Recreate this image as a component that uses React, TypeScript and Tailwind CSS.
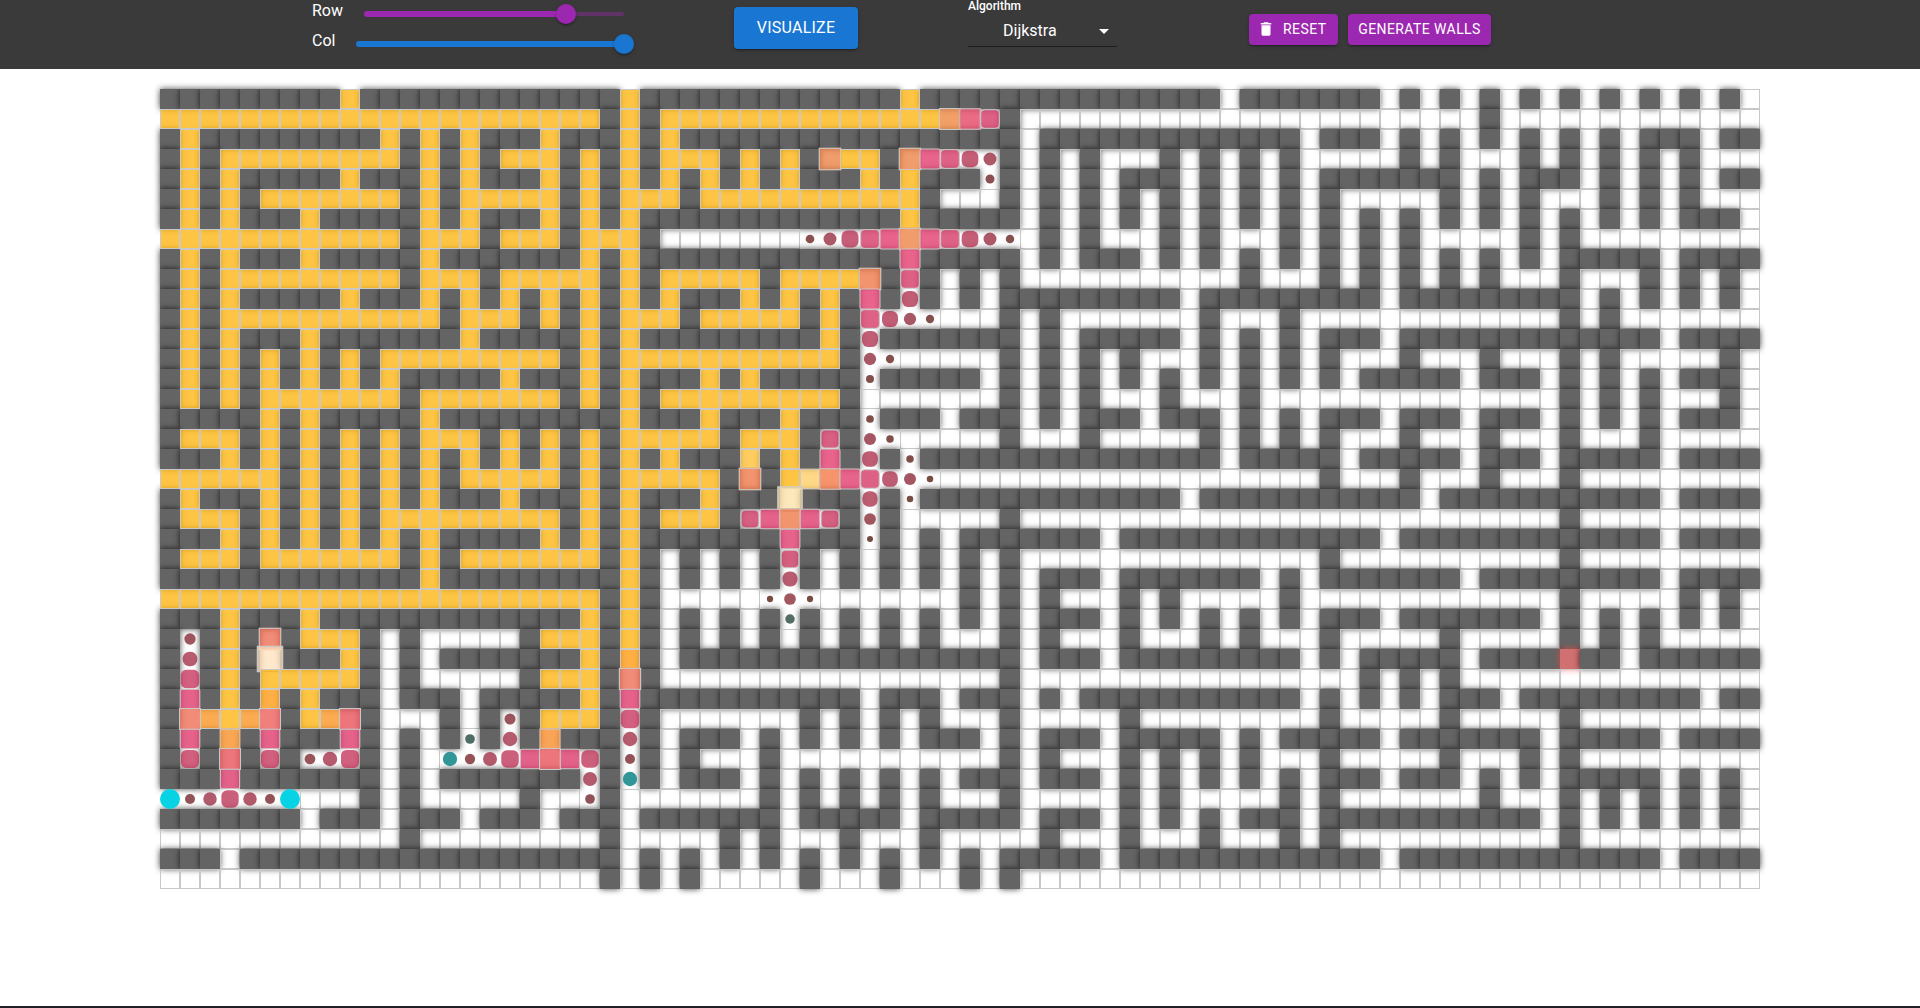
import type { CSSProperties } from "react";

// One character per cell: "#" wall, "y" visited, "." open, "T" target wall.
const MAZE: string[] = [
  "#########y##########" + "###y#############y##" + "#############.######" + "#.#.#.#.#.#.#.#.#.#.",
  "yyyyyyyyyyyyyyyyyyyy" + "yy#y#yyyyyyyyyyyyyyy" + "..#................." + "......#.............",
  "#y#########y#y#y###y" + "###y#y##############" + "###.#############.##" + "#.#.#.#.#.#.#.###.##",
  "#y#yyyyyyyyy#y#y#yyy" + "#y#y#yyy#y#y#yyy#y.." + "..#.#.#...#.#.#.#..." + "..#.#...#.#.#.#.#...",
  "#y#y#####y###y#y###y" + "#y#y#y#y#y#y###y#y##" + "#.#.#.#.###.#.#.#.##" + "#####.#.###.#.#.#.##",
  "#y#y#yyyyyyy#y#yyyyy" + "#y#yyy#yyyyyyyyyyy#." + "..#.#.#.#.#.#.#.#.#." + "....#.#.#...#.#.#...",
  "#y#y###y#####y#y###y" + "#y#y#############y##" + "###.#.#.#.#.#.#.#.#." + "#.#.#.#.#.#.#.#.###.",
  "yyyyyyyyyyyy#yyy#yyy" + "#yyy#..............." + "....#.#...#.#...#.#." + "#.#.....#.#.........",
  "#y#y###y#####y######" + "#y#y#############.##" + "###.#.###.#.#.#.#.#." + "#.#.#.#.#.#####.####",
  "#y#yyyyyyyyy#yyy#yyy" + "yy#y#yyyyy#yyyyy#.#." + "#.#...........#...#." + "#.#.#.#...#...#.#.#.",
  "#y#y#####y###y#y#y#y" + "#y#y#y###y#y#y#.#.#." + "#.#########.########" + "#.#########.#.#.#.#.",
  "#y#yyyyyyyyyyy#yyy#y" + "#y#yyy#yyyyy#y#....." + "..#.#.......#...#..." + "..........#.#.......",
  "#y#y###y#######y####" + "#y#y#########y#.####" + "###.#.#####.#.#.#.##" + "#.#############.####",
  "#y#y#y#y#y#yyyyyyyyy" + "#y#yyyyyyyyyyy#....." + "..#.#.#.#...#.#.#.#." + "..#...#...#.#.....#.",
  "#y#y#y#y#y#y#####y##" + "#y#y###y#y#####.####" + "#.#.#.#.#.#.#.#.#.#." + "#####.###.#.#.#.###.",
  "#y#y#yyyyyyy#yyyyyyy" + "#y#y#yyyyyyyyy#....." + "..#.#.#...#...#....." + "..........#.#.#...#.",
  "#####y#y#####y######" + "###y###y###y###.###." + "###.#.###.###.#.#.##" + "#.###.###.#.#.#.###.",
  "#yyy#y#y#y#y#yyy#y#y" + "#y#yyyyy#yyy#.#....." + "..#...#.....#.#.#.#." + "..#...#...#...#.....",
  "###y#y#y#y#y#y#y#y#y" + "#y#y#y###y#y#.#.#.##" + "#############.#####." + "#####.###.#####.####",
  "yyyyyy#y#y#y#y#yyyyy" + "#y#yyyyy#y#yyy......" + "..................#." + "..#...#...#.........",
  "#y###y#y#y#y#y###y##" + "#y#y###y###y###.#.##" + "###########.########" + "###.###########.####",
  "#yyy#y#y#y#yyyyyyyyy" + "#y#y#yyy#.....#.#..." + "..#................." + "..........#.........",
  "###y#y#y#y#y#y#####y" + "#y#y#######.###.#.#." + "#######.############" + "#.#############.####",
  "#yyy#yyyyyyy#y#yyyyy" + "yy#y#.#.#.#.#.#.#.#." + "#.#...............#." + "..........#.........",
  "#############y######" + "###y#.#.#.#.#.#.#.#." + "#.#.###.#######.#.##" + "#####.#########.####",
  "yyyyyyyyyyyyyyyyyyyy" + "yy#y#..............." + "#.#.#...#.#.....#..." + "..........#.....#.#.",
  "###y###y############" + "#y#y#.#.#.#.#.#.#.#." + "#.#.###.#.#.#.#.#.##" + "#.#######.#.#.#.#.#.",
  "#.#y#y#yyy#.#.....#y" + "yy#y#.#.#.#.#.#.#.#." + "..#.#...#...#.#...#." + "....#.....#.#.#.....",
  "#.#y#y###y#.#.######" + "#y#y#.##############" + "###.###.#########.#." + "#####.####T##.######",
  "#.#y#yyyyy#.#.....#y" + "yy#y#..............." + "..#................." + "#.#.#...............",
  "#.#y#y#y###.###.####" + "#y#.###########.###." + "###.#.###########.#." + "#.#.###.#########.##",
  "#yyyyy#yyy#...#.#.#y" + "yy#.#.......#.#.#.#." + "..#.....#.........#." + "....#.....#.........",
  "#.#y#.###.#.#.#.#.#y" + "###.#.###.#.#.#.#.##" + "#.#.###.#####.#.####" + "#.#######.#####.####",
  "#.#.#.#...#.#......." + "..#.#.#...#........." + "..#.#...#.#.#.#...#." + "....#...#.#.........",
  "###.#######.#.######" + "#.#.#.###.#.#.#.#.#." + "###.###.#.#.#.#.#.##" + "#.###.#.#.#####.#.#.",
  "..........#.#.....#." + "..#.......#.#.#.#.#." + "..#.....#.#.....#.#." + "......#...#.#.#.#.#.",
  "#######.###.###.###." + "###.#######.#####.##" + "###.###.#.#.#.###.##" + "#########.#.#.#.#.#.",
  "............#......." + "..#.....#.#...#...#." + "....#...#...#...#.#." + "..........#.........",
  "###.################" + "###.#.#.#.#.#.#.#.#." + "#.#####.############" + "#.#############.####",
  "...................." + "..#.#.#.....#...#..." + "#.#................." + "....................",
];

type Rgb = [number, number, number];
type Pulse = { size: number; color?: string; round?: boolean };

// Cells whose visit animation is still running, keyed "row:col".
const PULSES: Record<string, Pulse> = {};
function pulse(row: number, col: number, size: number, color?: string, round?: boolean) {
  PULSES[`${row}:${col}`] = { size, color, round };
}

const ORANGE = "rgba(235,123,59,0.75)";
const SALMON = "rgba(235,101,75,0.75)";
const CORAL = "rgba(229,72,80,0.75)";
const AMBER = "rgba(249,144,21,0.75)";

pulse(1, 39, 22, "rgba(237,128,53,0.75)");
pulse(1, 40, 21.5, "rgba(227,59,91,0.75)");
pulse(1, 41, 19.5);
pulse(3, 33, 22.5, ORANGE);
pulse(3, 37, 22.5, ORANGE);
pulse(3, 38, 21);
pulse(3, 39, 19.7);
pulse(3, 40, 16.7);
pulse(3, 41, 13);
pulse(4, 41, 9);
pulse(7, 32, 8.7);
pulse(7, 33, 13);
pulse(7, 34, 17);
pulse(7, 35, 19.7);
pulse(7, 36, 21);
pulse(7, 37, 22.5, ORANGE);
pulse(7, 38, 21);
pulse(7, 39, 19.7);
pulse(7, 40, 16.7);
pulse(7, 41, 13);
pulse(7, 42, 8.5);
pulse(8, 37, 21);
pulse(9, 35, 22.5, "rgba(237,112,61,0.75)");
pulse(9, 37, 19.5);
pulse(10, 35, 21);
pulse(10, 37, 16);
pulse(11, 35, 19.7);
pulse(11, 36, 16);
pulse(11, 37, 12.3);
pulse(11, 38, 8.3);
pulse(12, 35, 16);
pulse(13, 35, 12.3);
pulse(13, 36, 8.3);
pulse(14, 35, 8);
pulse(16, 35, 7.7);
pulse(17, 33, 19);
pulse(17, 35, 12);
pulse(17, 36, 7.5);
pulse(18, 29, 20, "rgba(255,187,43,0.75)");
pulse(18, 33, 21);
pulse(18, 35, 15.7);
pulse(18, 37, 7.5);
pulse(19, 29, 22.5, "rgba(237,112,61,0.75)");
pulse(19, 32, 20.5, "rgba(255,203,96,0.75)");
pulse(19, 33, 21.5, "rgba(243,112,61,0.75)");
pulse(19, 34, 21);
pulse(19, 35, 19.5);
pulse(19, 36, 15.7);
pulse(19, 37, 12);
pulse(19, 38, 6.5);
pulse(20, 31, 25.3, "rgba(252,224,165,0.75)");
pulse(20, 35, 15.3);
pulse(20, 37, 6.5);
pulse(21, 29, 18.7);
pulse(21, 30, 20.6);
pulse(21, 31, 21.5, "rgba(237,112,61,0.75)");
pulse(21, 32, 20.6);
pulse(21, 33, 18.7);
pulse(21, 35, 11.7);
pulse(22, 31, 20.8);
pulse(22, 35, 6);
pulse(23, 31, 18.5);
pulse(24, 31, 15);
pulse(25, 30, 6.3);
pulse(25, 31, 11.7);
pulse(25, 32, 6.3);
pulse(26, 31, 9.5, "#546c66", true);
pulse(27, 1, 11.3);
pulse(27, 5, 22.5, SALMON);
pulse(28, 1, 14.7);
pulse(28, 5, 26.3, "rgba(255,224,187,0.75)");
pulse(28, 23, 20, "rgba(253,149,5,0.75)");
pulse(29, 1, 18.3);
pulse(29, 23, 22.3, SALMON);
pulse(30, 1, 20.6);
pulse(30, 5, 20, "rgba(253,149,5,0.75)");
pulse(30, 23, 20.6);
pulse(31, 1, 22, SALMON);
pulse(31, 2, 20, AMBER);
pulse(31, 4, 20, AMBER);
pulse(31, 5, 22, "rgba(235,85,80,0.75)");
pulse(31, 8, 20, AMBER);
pulse(31, 9, 22, CORAL);
pulse(31, 17, 11);
pulse(31, 23, 18.3);
pulse(32, 1, 20.6);
pulse(32, 3, 20.6, "rgba(248,137,28,0.75)");
pulse(32, 5, 20.6);
pulse(32, 9, 20.6);
pulse(32, 15, 9.7, "#506c66", true);
pulse(32, 17, 14.3);
pulse(32, 19, 21, "rgba(248,133,32,0.75)");
pulse(32, 23, 14.3);
pulse(33, 1, 18);
pulse(33, 3, 22, CORAL);
pulse(33, 5, 18);
pulse(33, 7, 10.7);
pulse(33, 8, 14.3);
pulse(33, 9, 18);
pulse(33, 14, 14.3, "#309698", true);
pulse(33, 15, 10.3);
pulse(33, 16, 14);
pulse(33, 17, 17.5);
pulse(33, 18, 20.4);
pulse(33, 19, 22, CORAL);
pulse(33, 20, 20.4);
pulse(33, 21, 17.5);
pulse(33, 23, 10);
pulse(34, 3, 20.3);
pulse(34, 21, 14);
pulse(34, 23, 14.3, "#309698", true);
pulse(35, 0, 20, "#08d3e4", true);
pulse(35, 1, 10);
pulse(35, 2, 13.5);
pulse(35, 3, 17.3);
pulse(35, 4, 13.5);
pulse(35, 5, 10);
pulse(35, 6, 20, "#08d3e4", true);
pulse(35, 21, 9.7);

// Tint of a growing cell at a given size, interpolated between these stops.
const STOPS: [number, Rgb][] = [
  [6, [69, 15, 0]],
  [9, [99, 22, 21]],
  [13, [145, 34, 54]],
  [17, [181, 42, 77]],
  [19.5, [209, 44, 92]],
  [21, [224, 48, 101]],
];

function tint(size: number): string {
  let i = 0;
  while (i < STOPS.length - 2 && size > STOPS[i + 1][0]) i++;
  const [s0, a] = STOPS[i];
  const [s1, b] = STOPS[i + 1];
  const t = Math.max(0, Math.min(1, (size - s0) / (s1 - s0)));
  const mix = a.map((v, k) => Math.round(v + (b[k] - v) * t));
  return `rgba(${mix.join(",")},0.75)`;
}

function radius(size: number): number {
  if (size >= 21.3) return 0;
  if (size >= 20) return 2;
  if (size >= 14) return 10 - (size - 14);
  return 10;
}

function pulseStyle({ size, color, round }: Pulse): CSSProperties {
  return {
    transform: `scale(${size / 20})`,
    backgroundColor: color ?? tint(size),
    borderRadius: round ? 10 : color ? 0 : radius(size),
  };
}

const WALL = "size-5 bg-[#646464] shadow-[0_0_6px_rgba(0,0,0,0.75)]";
const TARGET = "size-5 bg-[#d07070] shadow-[0_0_6px_rgba(255,60,60,0.75)]";
const VISITED = "size-5 transform-[scale(1)] border border-[#c8c8c8] bg-[rgba(254,176,6,0.75)]";
const OPEN = "size-5 border border-[#c8c8c8]";

function Cell({ row, col, kind }: { row: number; col: number; kind: string }) {
  const p = PULSES[`${row}:${col}`];
  if (p) {
    const edge = p.size >= 18.4 && !p.round;
    return (
      <div
        className={edge ? "size-5 border border-[#c8c8c8]" : "size-5"}
        style={pulseStyle(p)}
      />
    );
  }
  if (kind === "#") return <div className={WALL} />;
  if (kind === "T") return <div className={TARGET} />;
  if (kind === "y") return <div className={VISITED} />;
  return <div className={OPEN} />;
}

function Board() {
  return (
    <div className="mx-auto mt-5 w-[1600px]">
      {MAZE.map((line, row) => (
        <div key={row} className="flex h-5">
          {line.split("").map((kind, col) => (
            <Cell key={col} row={row} col={col} kind={kind} />
          ))}
        </div>
      ))}
    </div>
  );
}

const THUMB =
  "absolute top-1/2 size-5 -translate-x-1/2 -translate-y-1/2 rounded-full shadow-[0_3px_1px_-2px_rgba(0,0,0,0.2),0_2px_2px_0_rgba(0,0,0,0.14),0_1px_5px_0_rgba(0,0,0,0.12)]";
const RAISED =
  "shadow-[0_3px_1px_-2px_rgba(0,0,0,0.2),0_2px_2px_0_rgba(0,0,0,0.14),0_1px_5px_0_rgba(0,0,0,0.12)]";

function Header() {
  return (
    <header className="flex h-[69px] items-start bg-[#3a3a3a] pl-[312px] text-white">
      <div className="-mt-px w-[312px]">
        <div className="flex h-[30px] items-start justify-between">
          <span className="text-base leading-6">Row</span>
          <div className="relative mt-3 flex h-1.5 w-[260px] items-center">
            <div className="h-1 w-full rounded-full bg-[#9c27b0]/40" />
            <div className="absolute left-0 h-1.5 w-[202px] rounded-full bg-[#9c27b0]" />
            <div className={`${THUMB} left-[202px] bg-[#9c27b0]`} />
          </div>
        </div>
        <div className="flex h-[30px] items-start justify-between">
          <span className="text-base leading-6">Col</span>
          <div className="relative mt-3 flex h-1.5 w-[268px] items-center">
            <div className="h-1.5 w-full rounded-full bg-[#1976d2]" />
            <div className={`${THUMB} left-[268px] bg-[#1976d2]`} />
          </div>
        </div>
      </div>
      <button
        className={`mt-[7px] ml-[110px] h-[42px] w-[124px] rounded bg-[#1976d2] text-base tracking-[0.015em] ${RAISED}`}
      >
        VISUALIZE
      </button>
      <div className="ml-[110px] h-[47px] w-[149px] border-b border-[#1c1c1c]">
        <div className="-mt-px h-[15px] text-xs leading-[15px] font-medium">Algorithm</div>
        <div className="flex h-[33px] items-center justify-between pr-px pl-[35px] text-base">
          <span>Dijkstra</span>
          <svg viewBox="0 0 24 24" className="size-6 fill-white">
            <path d="M7 10l5 5 5-5z" />
          </svg>
        </div>
      </div>
      <button
        className={`mt-3.5 ml-[132px] flex h-[31px] w-[89px] items-center rounded bg-[#9c27b0] pb-0.5 pl-2 text-sm tracking-[0.03em] ${RAISED}`}
      >
        <svg viewBox="0 0 24 24" className="mr-2 size-[18px] fill-white">
          <path d="M6 19c0 1.1.9 2 2 2h8c1.1 0 2-.9 2-2V7H6v12zM19 4h-3.5l-1-1h-5l-1 1H5v2h14V4z" />
        </svg>
        RESET
      </button>
      <button
        className={`mt-3.5 ml-2.5 h-[31px] w-[143px] rounded bg-[#9c27b0] pb-0.5 text-sm tracking-[0.03em] whitespace-nowrap ${RAISED}`}
      >
        GENERATE WALLS
      </button>
    </header>
  );
}

export default function App() {
  return (
    <div className="flex h-[1008px] flex-col overflow-hidden border-b-2 border-[#202124] bg-white font-[Roboto,sans-serif]">
      <Header />
      <Board />
    </div>
  );
}
